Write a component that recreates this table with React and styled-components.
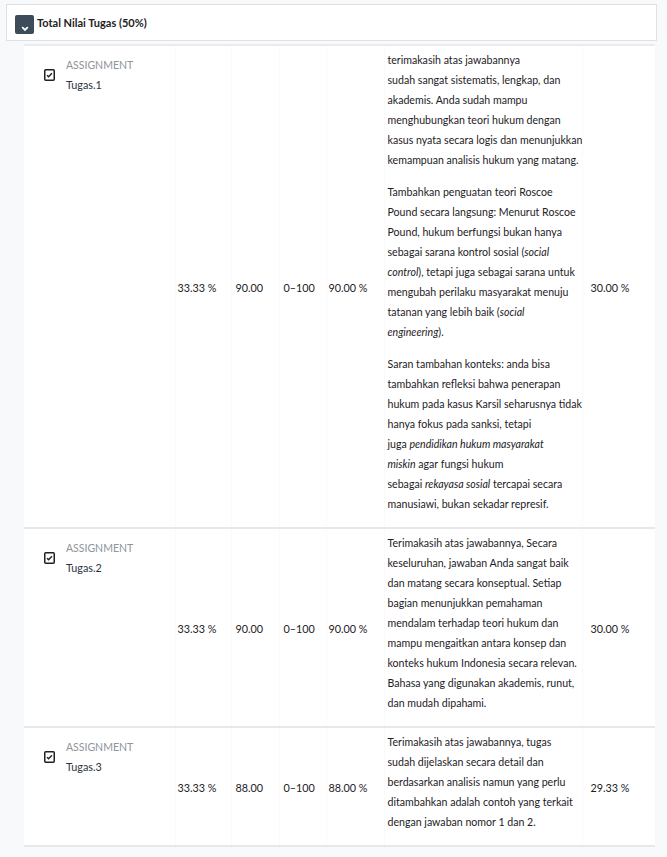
import React from "react";
import styled, { createGlobalStyle } from "styled-components";

const GlobalStyle = createGlobalStyle`
  html, body { margin: 0; padding: 0; }
  body {
    background: #f8f9fa;
    font-family: Lato, "Noto Sans", "Liberation Sans", sans-serif;
    color: #1d2125;
  }
`;

const Page = styled.div`
  padding: 4px 0 10px 6px;
  width: 651px;
`;

const Header = styled.div`
  display: flex;
  align-items: center;
  gap: 3px;
  height: 35px;
  padding-left: 8px;
  background: #ffffff;
  border: 1px solid #dee2e6;
`;

const ToggleIcon = styled.span`
  display: inline-flex;
  align-items: flex-end;
  justify-content: center;
  width: 19px;
  height: 19px;
  margin-top: 3px;
  border-radius: 2px;
  background: #3e4b58;
  padding-bottom: 2px;
  box-sizing: border-box;
`;

const Title = styled.span`
  font-size: 11px;
  font-weight: 700;
  color: #1d2125;
`;

const TableWrap = styled.div`
  margin: 3px 0 0 18px;
  width: 631px;
  overflow: hidden;
  background: #ffffff;
`;

const Table = styled.table`
  width: 631px;
  border-collapse: collapse;
  table-layout: fixed;
  border-top: 2px solid #e9ebef;
`;

const Row = styled.tr`
  border-bottom: 2px solid #e6e8ec;
`;

const Cell = styled.td`
  vertical-align: middle;
  font-size: 10.8px;
  color: #1d2125;
  padding: 2px 0 0 ${(p) => p.$pl || 3}px;
  border-left: 1px solid #fafafb;
  white-space: nowrap;
  overflow: hidden;
`;

const ItemCell = styled.td`
  vertical-align: top;
  padding: 9px 0 0 20px;
`;

const Item = styled.div`
  display: flex;
  align-items: center;
  gap: 11px;
`;

const ItemText = styled.div`
  display: flex;
  flex-direction: column;
  line-height: 20px;
`;

const Kind = styled.span`
  font-size: 10.5px;
  color: #8e949c;
  text-transform: uppercase;
`;

const Name = styled.span`
  font-size: 10.8px;
  color: #2b3440;
`;

const FeedbackCell = styled.td`
  vertical-align: top;
  padding: 4px 0 1px 3px;
  font-size: 10.6px;
  line-height: 20px;
  color: #1d2125;
  border-left: 1px solid #fafafb;
  white-space: nowrap;
  overflow: hidden;
`;

const Para = styled.p`
  margin: 0 0 12px;
`;

const CheckIcon = () => (
  <svg width="11" height="12" viewBox="0 0 11 12">
    <rect x="0.75" y="0.75" width="9.5" height="10.5" rx="1" fill="none" stroke="#1d2125" strokeWidth="1.5" />
    <path d="M3 6.2 L4.6 7.8 L8 4.2" fill="none" stroke="#1d2125" strokeWidth="1.4" />
  </svg>
);

const Chevron = () => (
  <svg width="8" height="6" viewBox="0 0 8 6">
    <path d="M1.2 1.2 L4 4 L6.8 1.2" fill="none" stroke="#ffffff" strokeWidth="1.8" />
  </svg>
);

const Lines = ({ lines }) =>
  lines.map((l, i) => (
    <React.Fragment key={i}>
      {l}
      {i < lines.length - 1 && <br />}
    </React.Fragment>
  ));

const rows = [
  {
    name: "Tugas.1",
    weight: "33.33 %",
    grade: "90.00",
    range: "0–100",
    pct: "90.00 %",
    contrib: "30.00 %",
    paras: [
      [
        "terimakasih atas jawabannya",
        "sudah sangat sistematis, lengkap, dan",
        "akademis. Anda sudah mampu",
        "menghubungkan teori hukum dengan",
        "kasus nyata secara logis dan menunjukkan",
        "kemampuan analisis hukum yang matang.",
      ],
      [
        "Tambahkan penguatan teori Roscoe",
        "Pound secara langsung: Menurut Roscoe",
        "Pound, hukum berfungsi bukan hanya",
        <>sebagai sarana kontrol sosial (<em>social</em></>,
        <><em>control</em>), tetapi juga sebagai sarana untuk</>,
        "mengubah perilaku masyarakat menuju",
        <>tatanan yang lebih baik (<em>social</em></>,
        <><em>engineering</em>).</>,
      ],
      [
        "Saran tambahan konteks: anda bisa",
        "tambahkan refleksi bahwa penerapan",
        "hukum pada kasus Karsil seharusnya tidak",
        "hanya fokus pada sanksi, tetapi",
        <>juga <em>pendidikan hukum masyarakat</em></>,
        <><em>miskin</em> agar fungsi hukum</>,
        <>sebagai <em>rekayasa sosial</em> tercapai secara</>,
        "manusiawi, bukan sekadar represif.",
      ],
    ],
  },
  {
    name: "Tugas.2",
    weight: "33.33 %",
    grade: "90.00",
    range: "0–100",
    pct: "90.00 %",
    contrib: "30.00 %",
    paras: [
      [
        "Terimakasih atas jawabannya, Secara",
        "keseluruhan, jawaban Anda sangat baik",
        "dan matang secara konseptual. Setiap",
        "bagian menunjukkan pemahaman",
        "mendalam terhadap teori hukum dan",
        "mampu mengaitkan antara konsep dan",
        "konteks hukum Indonesia secara relevan.",
        "Bahasa yang digunakan akademis, runut,",
        "dan mudah dipahami.",
      ],
    ],
  },
  {
    name: "Tugas.3",
    weight: "33.33 %",
    grade: "88.00",
    range: "0–100",
    pct: "88.00 %",
    contrib: "29.33 %",
    paras: [
      [
        "Terimakasih atas jawabannya, tugas",
        "sudah dijelaskan secara detail dan",
        "berdasarkan analisis namun yang perlu",
        "ditambahkan adalah contoh yang terkait",
        "dengan jawaban nomor 1 dan 2.",
      ],
    ],
  },
];

export default function App() {
  return (
    <>
      <GlobalStyle />
      <Page>
        <Header>
          <ToggleIcon>
            <Chevron />
          </ToggleIcon>
          <Title>Total Nilai Tugas (50%)</Title>
        </Header>
        <TableWrap>
          <Table>
            <colgroup>
              <col style={{ width: 151 }} />
              <col style={{ width: 56 }} />
              <col style={{ width: 48 }} />
              <col style={{ width: 47 }} />
              <col style={{ width: 58 }} />
              <col style={{ width: 198 }} />
              <col style={{ width: 73 }} />
            </colgroup>
            <tbody>
              {rows.map((r) => (
                <Row key={r.name}>
                  <ItemCell>
                    <Item>
                      <CheckIcon />
                      <ItemText>
                        <Kind>Assignment</Kind>
                        <Name>{r.name}</Name>
                      </ItemText>
                    </Item>
                  </ItemCell>
                  <Cell $pl={2}>{r.weight}</Cell>
                  <Cell $pl={4}>{r.grade}</Cell>
                  <Cell $pl={4}>{r.range}</Cell>
                  <Cell $pl={2}>{r.pct}</Cell>
                  <FeedbackCell>
                    {r.paras.map((p, i) => (
                      <Para key={i}>
                        <Lines lines={p} />
                      </Para>
                    ))}
                  </FeedbackCell>
                  <Cell $pl={8}>{r.contrib}</Cell>
                </Row>
              ))}
            </tbody>
          </Table>
        </TableWrap>
      </Page>
    </>
  );
}
